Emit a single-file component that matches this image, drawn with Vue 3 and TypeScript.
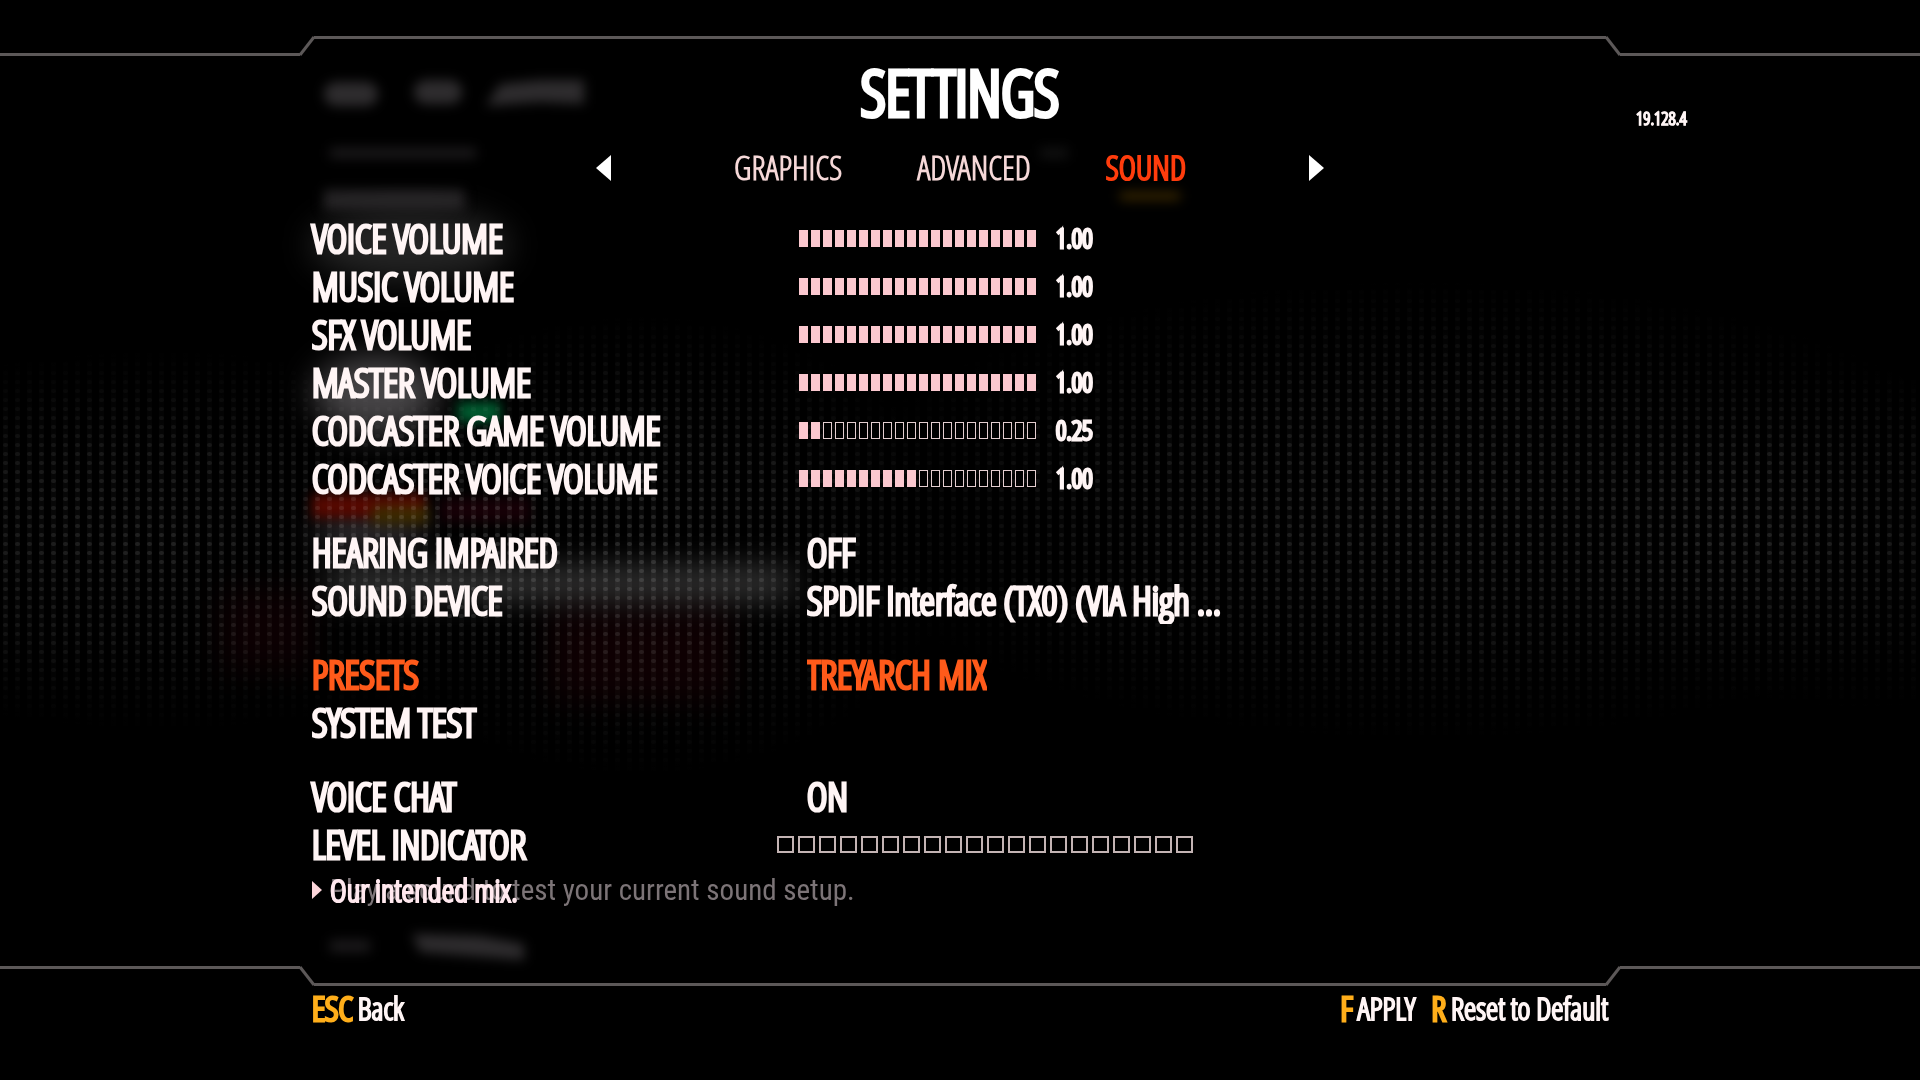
<script setup lang="ts">
import { ref } from 'vue'

interface VolumeSetting {
  id: string
  label: string
  level: number
  value: string
}

interface ChoiceSetting {
  id: string
  label: string
  options: string[]
}

const CELLS = 20

const tabs = ['GRAPHICS', 'ADVANCED', 'SOUND']
const activeTab = ref('SOUND')

const volumes = ref<VolumeSetting[]>([
  { id: 'voice', label: 'VOICE VOLUME', level: 20, value: '1.00' },
  { id: 'music', label: 'MUSIC VOLUME', level: 20, value: '1.00' },
  { id: 'sfx', label: 'SFX VOLUME', level: 20, value: '1.00' },
  { id: 'master', label: 'MASTER VOLUME', level: 20, value: '1.00' },
  { id: 'cast-game', label: 'CODCASTER GAME VOLUME', level: 2, value: '0.25' },
  { id: 'cast-voice', label: 'CODCASTER VOICE VOLUME', level: 10, value: '1.00' },
])

const output: ChoiceSetting[] = [
  { id: 'hearing', label: 'HEARING IMPAIRED', options: ['OFF', 'ON'] },
  { id: 'device', label: 'SOUND DEVICE', options: ['SPDIF Interface (TX0) (VIA High ...'] },
]
</script>

<template>
  <div class="screen">
    <svg class="backdrop" viewBox="0 0 1920 1080" preserveAspectRatio="xMidYMid slice" aria-hidden="true">
      <defs>
        <pattern id="dots" width="12" height="9" patternUnits="userSpaceOnUse">
          <rect x="3" y="0" width="5" height="9" fill="#fff" opacity=".25" />
          <rect x="3" y="2" width="5" height="4" rx="2" fill="#fff" />
        </pattern>
        <radialGradient id="fade">
          <stop offset="0" stop-color="#fff" />
          <stop offset=".5" stop-color="#fff" stop-opacity=".7" />
          <stop offset=".8" stop-color="#fff" stop-opacity=".25" />
          <stop offset="1" stop-color="#fff" stop-opacity="0" />
        </radialGradient>
        <filter id="soft" x="-50%" y="-100%" width="200%" height="300%" color-interpolation-filters="sRGB"><feGaussianBlur stdDeviation="6" /></filter>
        <filter id="wide" x="-50%" y="-100%" width="200%" height="300%" color-interpolation-filters="sRGB"><feGaussianBlur stdDeviation="16" /></filter>
        <mask id="haze">
          <ellipse cx="1420" cy="510" rx="600" ry="230" fill="url(#fade)" opacity=".13" />
          <ellipse cx="1860" cy="540" rx="300" ry="170" fill="url(#fade)" opacity=".07" />
          <ellipse cx="160" cy="540" rx="440" ry="190" fill="url(#fade)" opacity=".13" />
          <ellipse cx="640" cy="545" rx="320" ry="230" fill="url(#fade)" opacity=".15" />
        </mask>
      </defs>
      <g filter="url(#wide)">
        <ellipse cx="376" cy="394" rx="62" ry="38" fill="#464446" />
        <ellipse cx="410" cy="245" rx="100" ry="36" fill="#242424" />
        <rect x="330" y="570" width="460" height="26" fill="#3c3c3c" />
        <rect x="320" y="520" width="100" height="20" fill="#4a4448" />
        <rect x="550" y="610" width="180" height="90" fill="#0e0002" />
        <rect x="220" y="590" width="90" height="80" fill="#0c0002" />
      </g>
      <g filter="url(#soft)">
        <rect x="312" y="494" width="114" height="24" fill="#560800" />
        <rect x="372" y="506" width="56" height="18" fill="#3c2a00" />
        <rect x="440" y="498" width="90" height="24" fill="#160006" />
        <rect x="458" y="402" width="42" height="20" fill="#005c30" />
        <g fill="#2e2c2e">
          <rect x="324" y="82" width="54" height="24" rx="12" />
          <rect x="414" y="80" width="48" height="24" rx="12" />
          <path d="M486 106 L500 84 L540 80 H584 V104 L540 102 Z" />
          <rect x="330" y="148" width="146" height="10" opacity=".6" />
          <rect x="324" y="190" width="140" height="20" opacity=".8" />
          <rect x="330" y="940" width="40" height="12" opacity=".6" />
          <path d="M412 934 L480 936 L524 944 V960 L420 952 Z" />
          <rect x="1040" y="148" width="28" height="10" opacity=".4" />
        </g>
        <rect x="1120" y="192" width="60" height="8" fill="#3a2800" />
      </g>
      <rect width="1920" height="1080" fill="url(#dots)" mask="url(#haze)" />
    </svg>

    <div class="rule" aria-hidden="true">
      <i class="rule-side"></i>
      <svg viewBox="0 0 14 20"><path d="M0 19 L14 1" /></svg>
      <i class="rule-mid"></i>
      <svg viewBox="0 0 14 20"><path d="M0 1 L14 19" /></svg>
      <i class="rule-side"></i>
    </div>

    <header class="head">
      <h1>SETTINGS</h1>
      <p class="version">19.128.4</p>
    </header>

    <nav class="tabs" aria-label="Settings pages">
      <button type="button" class="arrow" aria-label="Previous page">
        <svg viewBox="0 0 15 26"><path d="M15 0 V26 L0 13 Z" /></svg>
      </button>
      <div class="tab-list">
        <button
          v-for="tab in tabs"
          :key="tab"
          type="button"
          class="tab"
          :class="{ active: tab === activeTab }"
          @click="activeTab = tab"
        >{{ tab }}</button>
      </div>
      <button type="button" class="arrow" aria-label="Next page">
        <svg viewBox="0 0 15 26"><path d="M0 0 V26 L15 13 Z" /></svg>
      </button>
    </nav>

    <main class="settings">
      <section class="group">
        <div v-for="item in volumes" :key="item.id" class="row">
          <label :for="item.id">{{ item.label }}</label>
          <div class="gauge">
            <div class="cells">
              <i v-for="n in CELLS" :key="n" :class="{ on: n <= item.level }"></i>
              <input :id="item.id" v-model.number="item.level" type="range" min="0" :max="CELLS" />
            </div>
            <output :for="item.id">{{ item.value }}</output>
          </div>
        </div>
      </section>

      <section class="group">
        <div v-for="item in output" :key="item.id" class="row">
          <label :for="item.id">{{ item.label }}</label>
          <select :id="item.id">
            <option v-for="option in item.options" :key="option">{{ option }}</option>
          </select>
        </div>
      </section>

      <section class="group">
        <div class="row selected">
          <label for="presets">PRESETS</label>
          <select id="presets"><option>TREYARCH MIX</option></select>
        </div>
        <div class="row">
          <button type="button" class="row-action">SYSTEM TEST</button>
        </div>
      </section>

      <section class="group last">
        <div class="row">
          <label for="chat">VOICE CHAT</label>
          <select id="chat"><option>ON</option><option>OFF</option></select>
        </div>
        <div class="row">
          <span id="level-label">LEVEL INDICATOR</span>
          <div class="level" role="meter" aria-labelledby="level-label" aria-valuemin="0" aria-valuemax="20" aria-valuenow="0">
            <i v-for="n in CELLS" :key="n"></i>
          </div>
        </div>
      </section>

      <div class="hint">
        <svg viewBox="0 0 10 18" aria-hidden="true"><path d="M0 0 V18 L10 9 Z" /></svg>
        <div class="hint-text">
          <p class="previous">Play a sound to test your current sound setup.</p>
          <p class="current">Our intended mix.</p>
        </div>
      </div>
    </main>

    <div class="rule" aria-hidden="true">
      <i class="rule-side up"></i>
      <svg viewBox="0 0 14 20"><path d="M0 1 L14 19" /></svg>
      <i class="rule-mid down"></i>
      <svg viewBox="0 0 14 20"><path d="M0 19 L14 1" /></svg>
      <i class="rule-side up"></i>
    </div>

    <footer class="foot">
      <button type="button"><kbd>ESC</kbd>Back</button>
      <div class="foot-right">
        <button type="button"><kbd>F</kbd>APPLY</button>
        <button type="button"><kbd>R</kbd>Reset to Default</button>
      </div>
    </footer>
  </div>
</template>

<style>
body {
  background: #000;
}
</style>

<style scoped>
.screen {
  --edge: 16.25%;
  --ink: #fff5f5;
  --accent: #ff5a1a;
  position: relative;
  box-sizing: border-box;
  min-height: 100vh;
  padding-top: 36px;
  overflow: hidden;
  background: #000;
  color: var(--ink);
  font-family: 'Open Sans Condensed Light', 'Open Sans Condensed', 'Roboto Condensed', sans-serif;
  font-size: 39px;
  font-weight: 700;
  line-height: 48px;
}

.screen > * {
  position: relative;
}

.screen > .backdrop {
  position: absolute;
  inset: 0;
  width: 100%;
  height: 100%;
}

h1,
p {
  margin: 0;
}

button,
select {
  margin: 0;
  padding: 0;
  border: 0;
  background: none;
  color: inherit;
  font: inherit;
  text-align: left;
  cursor: pointer;
}

/* Frame lines with a slanted step on each side */
.rule {
  display: flex;
  height: 20px;
}

.rule i {
  box-sizing: border-box;
  border: 0 solid #5c5858;
}

.rule svg {
  flex: none;
  width: 14px;
  height: 20px;
  fill: none;
  stroke: #5c5858;
  stroke-width: 3;
  overflow: visible;
}

.rule .rule-side {
  flex: none;
  width: 15.6%;
  border-bottom-width: 3px;
}

.rule .rule-side.up {
  border-width: 3px 0 0;
}

.rule .rule-mid {
  flex: 1;
  border-top-width: 3px;
}

.rule .rule-mid.down {
  border-width: 0 0 3px;
}

.head {
  display: grid;
  grid-template-columns: 1fr auto 1fr;
  align-items: center;
  height: 60px;
}

h1 {
  grid-column: 2;
  font-size: 63px;
  line-height: 60px;
  color: #fff;
  -webkit-text-stroke: 3px currentColor;
}

.version {
  justify-self: end;
  width: 284px;
  padding-top: 52px;
  font-size: 18px;
  line-height: 20px;
  -webkit-text-stroke: 1px currentColor;
}

.tabs {
  display: flex;
  align-items: center;
  justify-content: space-between;
  width: 728px;
  height: 48px;
  margin: 28px auto 22px;
}

.tab-list {
  display: flex;
  gap: 75px;
}

.tab {
  font-size: 33px;
  color: #f6d8d8;
}

.tab.active {
  color: #ff3c0c;
  -webkit-text-stroke: 1px currentColor;
}

.arrow svg {
  display: block;
  width: 15px;
  height: 26px;
  fill: #fff;
}

.settings {
  padding: 0 var(--edge);
  -webkit-text-stroke: 2px currentColor;
}

.group {
  margin-bottom: 26px;
}

.group.last {
  margin-bottom: 0;
}

.row {
  display: grid;
  grid-template-columns: 487px 1fr;
  align-items: center;
  height: 48px;
}

.row select {
  appearance: none;
  justify-self: start;
  height: 48px;
  margin-left: 8px;
  -webkit-text-stroke: 2px currentColor;
}

.row-action {
  -webkit-text-stroke: 2px currentColor;
}

.selected {
  color: var(--accent);
}

.gauge {
  display: flex;
  align-items: center;
  gap: 20px;
}

.gauge output {
  font-size: 26px;
}

.cells {
  position: relative;
  display: flex;
  gap: 3px;
}

.cells i {
  box-sizing: border-box;
  width: 9px;
  height: 17px;
  border: 1px solid #e4ced0;
}

.cells i.on {
  border-color: #fbc8cf;
  background: #fbc8cf;
}

.cells input {
  position: absolute;
  inset: 0;
  width: 100%;
  height: 100%;
  margin: 0;
  opacity: 0;
  cursor: pointer;
}

.level {
  display: flex;
  gap: 4px;
  margin-left: -22px;
}

.level i {
  box-sizing: border-box;
  width: 17px;
  height: 17px;
  border: 2px solid #c4b4b4;
}

.hint {
  display: flex;
  align-items: center;
  gap: 8px;
  height: 44px;
  margin-bottom: 54px;
  font-size: 32px;
}

.hint svg {
  width: 10px;
  height: 18px;
  fill: #fbd5da;
}

.hint-text {
  display: grid;
}

.hint-text p {
  grid-area: 1 / 1;
}

.hint-text .previous {
  color: #7c7477;
  font-family: 'Roboto Condensed', sans-serif;
  font-size: 29px;
  font-weight: 400;
  -webkit-text-stroke: 0;
}

.hint-text .current {
  color: #ffe8ee;
  -webkit-text-stroke: 1px currentColor;
}

.foot {
  display: flex;
  justify-content: space-between;
  padding: 0 var(--edge);
  font-size: 31px;
  line-height: 44px;
}

.foot-right {
  display: flex;
  gap: 16px;
}

.foot button {
  display: flex;
  align-items: center;
  gap: 5px;
  -webkit-text-stroke: 1px currentColor;
}

.foot kbd {
  color: #ffae1a;
  font-family: inherit;
  font-size: 34px;
  -webkit-text-stroke: 2px currentColor;
}
</style>
